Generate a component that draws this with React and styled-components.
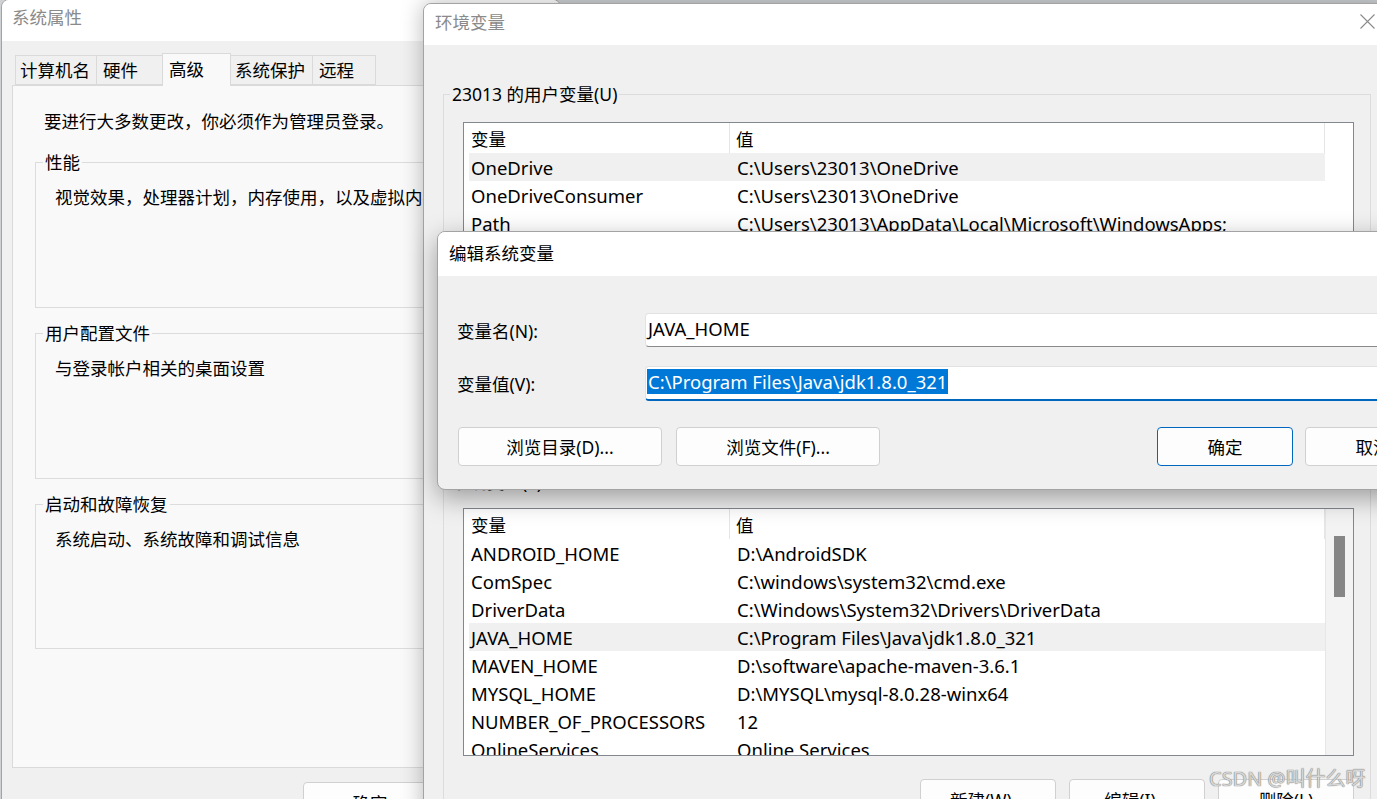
import styled, { createGlobalStyle } from "styled-components";

const GlobalStyle = createGlobalStyle`
  *, *::before, *::after { box-sizing: border-box; }
  html, body {
    margin: 0;
    padding: 0;
    overflow: hidden;
    background: #cfd2d4;
  }
  body {
    font-family: "Noto Sans", "Noto Sans CJK SC", sans-serif;
    font-size: 17.5px;
    color: #000;
  }
`;

const Desktop = styled.div`
  position: relative;
  width: 1377px;
  height: 799px;
  overflow: hidden;
  background: #cfd2d4;
`;

/* windows sit on a desktop, so their place is the content itself */
const Window = styled.div`
  position: absolute;
  left: ${(p) => p.$left}px;
  top: ${(p) => p.$top}px;
  width: ${(p) => p.$width}px;
  height: ${(p) => p.$height}px;
  z-index: ${(p) => p.$z};
  display: flex;
  flex-direction: column;
  background: #f0f0f0;
  border: 1px solid #a3a3a3;
  border-radius: 8px;
  overflow: hidden;
  box-shadow: ${(p) => p.$shadow || "none"};
`;

const TitleBar = styled.div`
  flex: 0 0 ${(p) => p.$h}px;
  display: flex;
  align-items: center;
  justify-content: space-between;
  background: #fff;
  padding: 0 0 ${(p) => p.$pb || 0}px ${(p) => p.$pl}px;
  color: ${(p) => (p.$active ? "#000" : "#8a8a8a")};
  line-height: 1;
`;

const CloseBtn = styled.div`
  width: 46px;
  align-self: stretch;
  display: flex;
  align-items: center;
  justify-content: center;
  padding-bottom: 3px;
`;

const Body = styled.div`
  flex: 1;
  display: flex;
  flex-direction: column;
  padding: ${(p) => p.$pad};
`;

/* --- system properties --- */
const TabRow = styled.div`
  display: flex;
  align-items: flex-end;
  height: 32px;
  margin-left: 3px;
  position: relative;
  z-index: 1;
`;

const Tab = styled.div`
  width: ${(p) => p.$w}px;
  height: ${(p) => (p.$active ? 33 : 30)}px;
  display: flex;
  align-items: center;
  padding-left: ${(p) => p.$pl}px;
  padding-bottom: ${(p) => (p.$active ? 4 : 1)}px;
  margin-right: -1px;
  margin-bottom: ${(p) => (p.$active ? -1 : 0)}px;
  background: ${(p) => (p.$active ? "#f9f9f9" : "#f0f0f0")};
  border: 1px solid #dadada;
  border-bottom: ${(p) => (p.$active ? "none" : "1px solid #dadada")};
  white-space: nowrap;
`;

const TabPanel = styled.div`
  width: 540px;
  height: 683px;
  background: #f9f9f9;
  border: 1px solid #dadada;
  padding: 23px 0 0 22px;
  display: flex;
  flex-direction: column;
`;

const Intro = styled.div`
  margin-left: 9px;
  line-height: 24px;
  white-space: nowrap;
`;

const Group = styled.fieldset`
  margin: ${(p) => p.$mt}px 0 0 0;
  width: ${(p) => p.$w}px;
  height: ${(p) => (p.$h ? `${p.$h}px` : "auto")};
  border: 1px solid #dcdcdc;
  padding: 0 ${(p) => p.$pr || 0}px ${(p) => p.$pb || 0}px ${(p) => p.$pl}px;
  min-width: 0;
`;

const Legend = styled.legend`
  padding: 0 2px;
  line-height: 24px;
  white-space: nowrap;
`;

const GroupText = styled.div`
  margin: 11px 0 0 12px;
  line-height: 24px;
  white-space: nowrap;
`;

const ButtonRow = styled.div`
  display: flex;
  flex: ${(p) => (p.$grow ? 1 : "0 0 auto")};
  gap: ${(p) => p.$gap}px;
  margin: ${(p) => p.$mt}px 0 0 ${(p) => p.$ml || 0}px;
  justify-content: ${(p) => p.$justify || "flex-start"};
`;

const Button = styled.button`
  flex: 0 0 ${(p) => p.$w}px;
  width: ${(p) => p.$w}px;
  height: ${(p) => p.$h}px;
  padding: 0;
  background: #fdfdfd;
  border: 1px solid ${(p) => (p.$primary ? "#0067c0" : "#d0d0d0")};
  border-radius: 4px;
  font: inherit;
  color: #000;
  white-space: nowrap;
`;

/* --- environment variables --- */
const ListBox = styled.div`
  margin-top: ${(p) => p.$mt}px;
  margin-left: 13px;
  width: 891px;
  height: ${(p) => p.$h}px;
  background: #fff;
  border: 1px solid #828790;
  display: flex;
  overflow: hidden;
`;

const ListBody = styled.div`
  flex: 1;
  padding-left: 5px;
  white-space: nowrap;
`;

const HeaderRow = styled.div`
  display: flex;
  height: 30px;
`;

const HeaderCell = styled.div`
  flex: ${(p) => (p.$w ? `0 0 ${p.$w}px` : "1")};
  display: flex;
  align-items: center;
  padding-left: ${(p) => p.$pl}px;
  border-right: 1px solid #e5e5e5;
`;

const Row = styled.div`
  display: flex;
  align-items: center;
  height: 28px;
  background: ${(p) => (p.$selected ? "#f0f0f0" : "transparent")};
`;

const Cell = styled.div`
  flex: ${(p) => (p.$w ? `0 0 ${p.$w}px` : "1")};
  padding-left: ${(p) => p.$pl}px;
  font-size: 18.5px;
  overflow: hidden;
`;

const ScrollTrack = styled.div`
  flex: 0 0 28px;
  background: ${(p) => (p.$thumb ? "#f3f3f3" : "#fff")};
  border-left: ${(p) => (p.$thumb ? "1px solid #e6e6e6" : "none")};
`;

const Thumb = styled.div`
  margin: 27px 0 0 8px;
  width: 11px;
  height: 61px;
  background: #868686;
`;

/* --- edit dialog --- */
const FieldRow = styled.div`
  display: grid;
  grid-template-columns: 188px 1fr;
  align-items: center;
  margin-top: ${(p) => p.$mt}px;
`;

const Label = styled.div`
  white-space: nowrap;
`;

const Input = styled.div`
  height: ${(p) => p.$h}px;
  background: #fff;
  border: 1px solid #e2e2e2;
  border-bottom: ${(p) => (p.$focus ? "2px solid #0067c0" : "1px solid #8a8a8a")};
  border-radius: 4px;
  padding: 0 0 3px ${(p) => (p.$focus ? 1 : 2)}px;
  display: flex;
  align-items: center;
  font-size: 18.5px;
  white-space: nowrap;
`;

const Selection = styled.span`
  background: #0078d7;
  color: #fff;
  line-height: 25px;
  padding: 0 1px;
`;

const Watermark = styled.div`
  position: absolute;
  left: 1209px;
  top: 765px;
  z-index: 10;
  font-size: 20px;
  line-height: 28px;
  color: #d6d6d6;
  text-shadow: 0 0 1px #6f6f6f, 0 0 1px #8a8a8a;
  white-space: nowrap;
`;

const userVars = [
  ["OneDrive", "C:\\Users\\23013\\OneDrive", true],
  ["OneDriveConsumer", "C:\\Users\\23013\\OneDrive"],
  ["Path", "C:\\Users\\23013\\AppData\\Local\\Microsoft\\WindowsApps;"],
  ["TEMP", "C:\\Users\\23013\\AppData\\Local\\Temp"],
  ["TMP", "C:\\Users\\23013\\AppData\\Local\\Temp"],
];

const sysVars = [
  ["ANDROID_HOME", "D:\\AndroidSDK"],
  ["ComSpec", "C:\\windows\\system32\\cmd.exe"],
  ["DriverData", "C:\\Windows\\System32\\Drivers\\DriverData"],
  ["JAVA_HOME", "C:\\Program Files\\Java\\jdk1.8.0_321", true],
  ["MAVEN_HOME", "D:\\software\\apache-maven-3.6.1"],
  ["MYSQL_HOME", "D:\\MYSQL\\mysql-8.0.28-winx64"],
  ["NUMBER_OF_PROCESSORS", "12"],
  ["OnlineServices", "Online Services"],
  ["OS", "Windows_NT"],
];

const tabs = [
  { name: "计算机名", w: 82, pl: 4 },
  { name: "硬件", w: 67, pl: 6 },
  { name: "高级", w: 69, pl: 6, active: true },
  { name: "系统保护", w: 83, pl: 4 },
  { name: "远程", w: 64, pl: 6 },
];

function VarList({ rows, height, mt, scroll }) {
  return (
    <ListBox $h={height} $mt={mt}>
      <ListBody>
        <HeaderRow>
          <HeaderCell $w={261} $pl={2}>变量</HeaderCell>
          <HeaderCell $pl={6}>值</HeaderCell>
        </HeaderRow>
        {rows.map(([name, value, sel]) => (
          <Row key={name} $selected={sel}>
            <Cell $w={261} $pl={2}>{name}</Cell>
            <Cell $pl={7}>{value}</Cell>
          </Row>
        ))}
      </ListBody>
      <ScrollTrack $thumb={scroll}>{scroll && <Thumb />}</ScrollTrack>
    </ListBox>
  );
}

function CloseIcon() {
  return (
    <svg width="15" height="15" viewBox="0 0 15 15">
      <path d="M0.5 0.5 L14.5 14.5 M14.5 0.5 L0.5 14.5" stroke="#8a8a8a" strokeWidth="1.1" fill="none" />
    </svg>
  );
}

export default function App() {
  return (
    <Desktop>
      <GlobalStyle />

      <Window $left={1} $top={-1} $width={560} $height={830} $z={1}>
        <TitleBar $h={41} $pl={10} $pb={5}>系统属性</TitleBar>
        <Body $pad="12px 0 0 10px">
          <TabRow>
            {tabs.map((t) => (
              <Tab key={t.name} $w={t.w} $pl={t.pl} $active={t.active}>
                {t.name}
              </Tab>
            ))}
          </TabRow>
          <TabPanel>
            <Intro>要进行大多数更改，你必须作为管理员登录。</Intro>
            <Group $mt={17} $w={480} $h={158} $pl={7}>
              <Legend>性能</Legend>
              <GroupText>视觉效果，处理器计划，内存使用，以及虚拟内存</GroupText>
            </Group>
            <Group $mt={13} $w={480} $h={158} $pl={7}>
              <Legend>用户配置文件</Legend>
              <GroupText>与登录帐户相关的桌面设置</GroupText>
            </Group>
            <Group $mt={13} $w={480} $h={157} $pl={7}>
              <Legend>启动和故障恢复</Legend>
              <GroupText>系统启动、系统故障和调试信息</GroupText>
            </Group>
          </TabPanel>
          <ButtonRow $gap={12} $mt={14} $ml={291}>
            <Button $w={134} $h={40}>确定</Button>
            <Button $w={134} $h={40}>取消</Button>
          </ButtonRow>
        </Body>
      </Window>

      <Window
        $left={423}
        $top={3}
        $width={968}
        $height={830}
        $z={2}
        $shadow="0 0 22px rgba(0,0,0,0.28)"
      >
        <TitleBar $h={41} $pl={11} $pb={3}>
          环境变量
          <CloseBtn>
            <CloseIcon />
          </CloseBtn>
        </TitleBar>
        <Body $pad="37px 0 0 19px">
          <Group $mt={0} $w={928} $pl={6} $pr={16} $pb={14}>
            <Legend>23013 的用户变量(U)</Legend>
            <VarList rows={userVars} height={260} mt={16} />
            <ButtonRow $gap={13} $mt={14} $justify="flex-end">
              <Button $w={136} $h={40}>新建(N)...</Button>
              <Button $w={136} $h={40}>编辑(E)...</Button>
              <Button $w={136} $h={40}>删除(D)</Button>
            </ButtonRow>
          </Group>
          <Group $mt={19} $w={928} $pl={6} $pr={16} $pb={14}>
            <Legend>系统变量(S)</Legend>
            <VarList rows={sysVars} height={248} mt={14} scroll />
            <ButtonRow $gap={13} $mt={23} $justify="flex-end">
              <Button $w={136} $h={40}>新建(W)...</Button>
              <Button $w={136} $h={40}>编辑(I)...</Button>
              <Button $w={136} $h={40}>删除(L)</Button>
            </ButtonRow>
          </Group>
        </Body>
      </Window>

      <Window
        $left={437}
        $top={231}
        $width={1022}
        $height={259}
        $z={3}
        $shadow="0 8px 26px rgba(0,0,0,0.35)"
      >
        <TitleBar $h={44} $pl={11} $active>编辑系统变量</TitleBar>
        <Body $pad="37px 17px 0 19px">
          <FieldRow $mt={0}>
            <Label>变量名(N):</Label>
            <Input $h={34}>JAVA_HOME</Input>
          </FieldRow>
          <FieldRow $mt={19}>
            <Label>变量值(V):</Label>
            <Input $h={35} $focus>
              <Selection>C:\Program Files\Java\jdk1.8.0_321</Selection>
            </Input>
          </FieldRow>
          <ButtonRow $gap={14} $mt={26} $ml={1}>
            <Button $w={204} $h={39}>浏览目录(D)...</Button>
            <Button $w={204} $h={39}>浏览文件(F)...</Button>
            <ButtonRow $gap={12} $mt={0} $justify="flex-end" $grow>
              <Button $w={136} $h={39} $primary>确定</Button>
              <Button $w={136} $h={39}>取消</Button>
            </ButtonRow>
          </ButtonRow>
        </Body>
      </Window>

      <Watermark>CSDN @叫什么呀</Watermark>
    </Desktop>
  );
}
